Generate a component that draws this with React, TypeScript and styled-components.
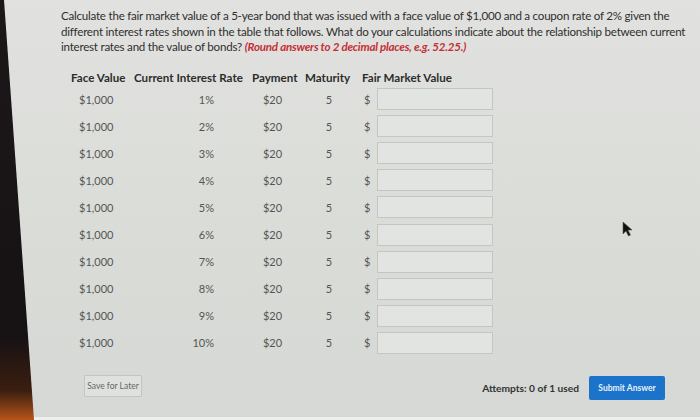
import styled, { createGlobalStyle } from 'styled-components';

interface BondRow {
  face: string;
  rate: string;
  payment: string;
  maturity: string;
}

const rows: BondRow[] = [1, 2, 3, 4, 5, 6, 7, 8, 9, 10].map((r) => ({
  face: '$1,000',
  rate: `${r}%`,
  payment: '$20',
  maturity: '5',
}));

const GlobalStyle = createGlobalStyle`
  html, body {
    margin: 0;
    padding: 0;
    height: 100%;
  }
  body {
    font-family: Lato, "Open Sans", "Liberation Sans", sans-serif;
    background: linear-gradient(180deg, #e1e2df 0%, #dadcd8 55%, #d5d8d4 100%);
    color: #333;
    overflow: hidden;
  }
`;

const App = () => {
  return (
    <>
      <GlobalStyle />
      <Bezel />
      <Page>
        <Question>
          Calculate the fair market value of a 5-year bond that was issued with a face value of $1,000 and a coupon rate of 2% given the
          <br />
          different interest rates shown in the table that follows. What do your calculations indicate about the relationship between current
          <br />
          interest rates and the value of bonds? <Hint>(Round answers to 2 decimal places, e.g. 52.25.)</Hint>
        </Question>

        <Table>
          <HeadCell>Face Value</HeadCell>
          <HeadCell>Current Interest Rate</HeadCell>
          <HeadCell>Payment</HeadCell>
          <HeadCell>Maturity</HeadCell>
          <HeadCell>Fair Market Value</HeadCell>
          {rows.map((row) => (
            <Row key={row.rate}>
              <Cell $align="left" $pad={8}>{row.face}</Cell>
              <Cell $align="right" $pad={38}>{row.rate}</Cell>
              <Cell $align="center" $pad={12}>{row.payment}</Cell>
              <Cell $align="center" $pad={9}>{row.maturity}</Cell>
              <AnswerCell>
                <Dollar>$</Dollar>
                <AnswerInput type="text" aria-label={`Fair market value at ${row.rate}`} />
              </AnswerCell>
            </Row>
          ))}
        </Table>

        <Footer>
          <SaveButton type="button">Save for Later</SaveButton>
          <SubmitGroup>
            <Attempts>Attempts: 0 of 1 used</Attempts>
            <SubmitButton type="button">Submit Answer</SubmitButton>
          </SubmitGroup>
        </Footer>
      </Page>
      <Cursor width="12" height="16" viewBox="0 0 12 16">
        <path d="M1 1 L1 13 L4 10 L6.5 15 L8.5 14 L6 9 L10 9 Z" fill="#111" stroke="#555" strokeWidth="0.6" />
      </Cursor>
    </>
  );
};

export default App;

const Bezel = styled.div`
  position: fixed;
  inset: 0;
  background: linear-gradient(180deg, #1d1719 0%, #161214 80%, #3a1e10 93%, #b8541a 100%);
  clip-path: polygon(0 0, 4px 0, 34px 100%, 0 100%);
  z-index: 2;
`;

const Page = styled.div`
  height: 420px;
  box-sizing: border-box;
  padding: 8px 10px 0 61px;
  display: flex;
  flex-direction: column;
  border-bottom: 3px solid #eef0ee;
`;

const Question = styled.p`
  margin: 0;
  font-size: 11.6px;
  letter-spacing: -0.24px;
  line-height: 15.5px;
  color: #2f2f2f;
  white-space: nowrap;
`;

const Hint = styled.span`
  color: #c62f36;
  font-weight: 700;
  font-style: italic;
`;

const Table = styled.div`
  margin: 14px 0 0 10px;
  display: grid;
  grid-template-columns: 63px 118px 53px 57px 140px;
  grid-template-rows: 17px;
  grid-auto-rows: 27.1px;
  align-items: center;
`;

const HeadCell = styled.div`
  font-size: 11.6px;
  font-weight: 700;
  color: #2c2c2c;
  white-space: nowrap;
`;

const Row = styled.div`
  display: contents;
`;

const Cell = styled.div<{ $align: 'left' | 'right' | 'center'; $pad: number }>`
  font-size: 11px;
  color: #555;
  text-align: ${({ $align }) => $align};
  padding-left: ${({ $align, $pad }) => ($align === 'left' ? `${$pad}px` : '0')};
  padding-right: ${({ $align, $pad }) => ($align === 'left' ? '0' : `${$pad}px`)};
  white-space: nowrap;
`;

const AnswerCell = styled.div`
  display: flex;
  align-items: center;
  gap: 7px;
`;

const Dollar = styled.span`
  font-size: 11px;
  color: #555;
  padding-left: 2px;
`;

const AnswerInput = styled.input`
  width: 116px;
  height: 22px;
  box-sizing: border-box;
  border: 1px solid #c4c6c3;
  background: #e2e4e1;
  outline: none;
  padding: 0 4px;
`;

const Footer = styled.div`
  margin-top: auto;
  margin-bottom: 17px;
  padding: 0 25px 0 23px;
  display: flex;
  align-items: flex-end;
  justify-content: space-between;
`;

const SaveButton = styled.button`
  height: 22px;
  width: 58px;
  margin-bottom: 3px;
  padding: 0;
  font-family: inherit;
  font-size: 8.5px;
  color: #666;
  background: #dfe1de;
  border: 1px solid #c3c5c2;
  border-radius: 1px;
`;

const SubmitGroup = styled.div`
  display: flex;
  align-items: center;
  gap: 10px;
`;

const Attempts = styled.span`
  font-size: 10.2px;
  font-weight: 700;
  color: #333;
`;

const SubmitButton = styled.button`
  height: 24px;
  width: 76px;
  padding: 0;
  font-family: inherit;
  font-size: 8.5px;
  font-weight: 700;
  color: #e6f0fb;
  background: #1b74c9;
  border: none;
  border-radius: 2px;
`;

const Cursor = styled.svg`
  position: fixed;
  left: 622px;
  top: 221px;
`;
